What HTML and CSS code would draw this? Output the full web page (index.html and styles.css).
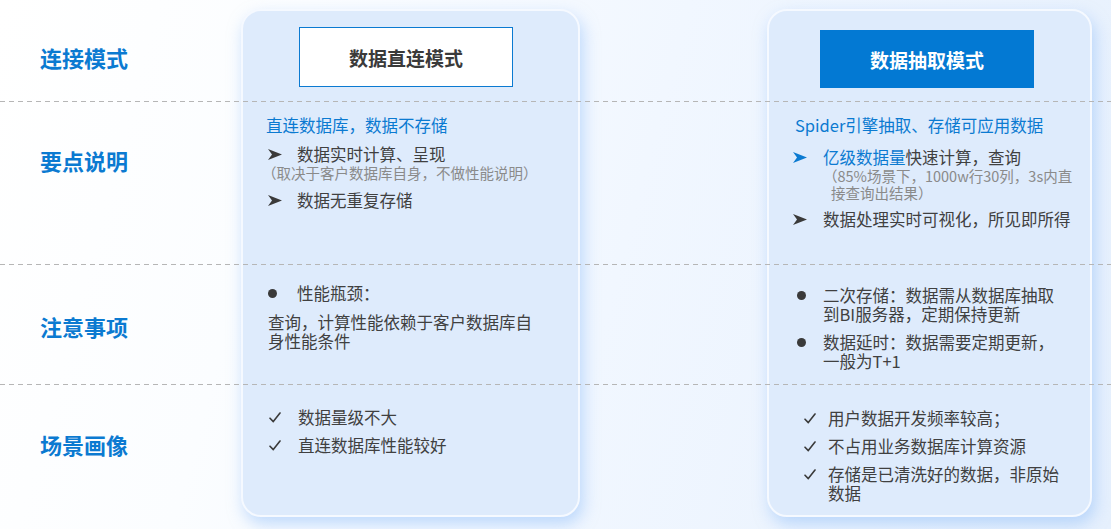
FILE: index.html
```html
<!DOCTYPE html>
<html lang="zh-CN">
<head>
<meta charset="utf-8">
<title>连接模式对比</title>
<link rel="stylesheet" href="styles.css">
</head>
<body>
<div class="board">
  <div class="card col-a"></div>
  <div class="card col-b"></div>

  <div class="rule row-1"></div>
  <div class="rule row-2"></div>
  <div class="rule row-3"></div>

  <div class="label row-1">连接模式</div>
  <div class="label row-2">要点说明</div>
  <div class="label row-3">注意事项</div>
  <div class="label row-4">场景画像</div>

  <!-- Row 1: mode headers -->
  <div class="cell col-a row-1">
    <div class="mode mode-outline">数据直连模式</div>
  </div>
  <div class="cell col-b row-1">
    <div class="mode mode-solid">数据抽取模式</div>
  </div>

  <!-- Row 2: key points -->
  <div class="cell col-a row-2 pad-2 left">
    <div class="lead">直连数据库，数据不存储</div>
    <div class="item arrow first">
      <span class="ico"><svg width="14" height="11" viewBox="0 0 14 11"><polygon points="0,0 14,5.5 0,11 4,5.5" fill="#3a3a3a"/></svg></span>
      <span class="txt">数据实时计算、呈现</span>
    </div>
    <div class="sub sub-a">（取决于客户数据库自身，不做性能说明）</div>
    <div class="item arrow">
      <span class="ico"><svg width="14" height="11" viewBox="0 0 14 11"><polygon points="0,0 14,5.5 0,11 4,5.5" fill="#3a3a3a"/></svg></span>
      <span class="txt">数据无重复存储</span>
    </div>
  </div>
  <div class="cell col-b row-2 pad-2 right">
    <div class="lead">Spider引擎抽取、存储可应用数据</div>
    <div class="item arrow first wide">
      <span class="ico"><svg width="14" height="11" viewBox="0 0 14 11"><polygon points="0,0 14,5.5 0,11 4,5.5" fill="#0b7ad1"/></svg></span>
      <span class="txt"><span class="hl">亿级数据量</span>快速计算，查询
        <span class="sub sub-b">（85%场景下，1000w行30列，3s内直<br>接查询出结果）</span>
      </span>
    </div>
    <div class="item arrow">
      <span class="ico"><svg width="14" height="11" viewBox="0 0 14 11"><polygon points="0,0 14,5.5 0,11 4,5.5" fill="#3a3a3a"/></svg></span>
      <span class="txt">数据处理实时可视化，所见即所得</span>
    </div>
  </div>

  <!-- Row 3: notes -->
  <div class="cell col-a row-3 pad-3 left">
    <div class="item dot">
      <span class="ico"><span class="disc"></span></span>
      <span class="txt">性能瓶颈：</span>
    </div>
    <p class="para">查询，计算性能依赖于客户数据库自<br>身性能条件</p>
  </div>
  <div class="cell col-b row-3 pad-3b right">
    <div class="item dot">
      <span class="ico"><span class="disc"></span></span>
      <span class="txt">二次存储：数据需从数据库抽取<br>到BI服务器，定期保持更新</span>
    </div>
    <div class="item dot">
      <span class="ico"><span class="disc"></span></span>
      <span class="txt">数据延时：数据需要定期更新，<br>一般为T+1</span>
    </div>
  </div>

  <!-- Row 4: scenarios -->
  <div class="cell col-a row-4 pad-4 left">
    <div class="item check">
      <span class="ico"><svg width="12" height="11" viewBox="0 0 12 11"><path d="M1 6.2 L4.3 9.6 L11 1" fill="none" stroke="#3a3a3a" stroke-width="1.6" stroke-linecap="round" stroke-linejoin="round"/></svg></span>
      <span class="txt">数据量级不大</span>
    </div>
    <div class="item check">
      <span class="ico"><svg width="12" height="11" viewBox="0 0 12 11"><path d="M1 6.2 L4.3 9.6 L11 1" fill="none" stroke="#3a3a3a" stroke-width="1.6" stroke-linecap="round" stroke-linejoin="round"/></svg></span>
      <span class="txt">直连数据库性能较好</span>
    </div>
  </div>
  <div class="cell col-b row-4 pad-4b right">
    <div class="item check">
      <span class="ico"><svg width="12" height="11" viewBox="0 0 12 11"><path d="M1 6.2 L4.3 9.6 L11 1" fill="none" stroke="#3a3a3a" stroke-width="1.6" stroke-linecap="round" stroke-linejoin="round"/></svg></span>
      <span class="txt">用户数据开发频率较高；</span>
    </div>
    <div class="item check">
      <span class="ico"><svg width="12" height="11" viewBox="0 0 12 11"><path d="M1 6.2 L4.3 9.6 L11 1" fill="none" stroke="#3a3a3a" stroke-width="1.6" stroke-linecap="round" stroke-linejoin="round"/></svg></span>
      <span class="txt">不占用业务数据库计算资源</span>
    </div>
    <div class="item check">
      <span class="ico"><svg width="12" height="11" viewBox="0 0 12 11"><path d="M1 6.2 L4.3 9.6 L11 1" fill="none" stroke="#3a3a3a" stroke-width="1.6" stroke-linecap="round" stroke-linejoin="round"/></svg></span>
      <span class="txt">存储是已清洗好的数据，非原始<br>数据</span>
    </div>
  </div>
</div>
</body>
</html>
```

FILE: styles.css
```css
* { box-sizing: border-box; }
html, body { margin: 0; padding: 0; }
body {
  width: 1111px;
  height: 529px;
  overflow: hidden;
  font-family: "Noto Sans CJK SC", "Liberation Sans", sans-serif;
  color: #404040;
  background: linear-gradient(105deg, #ffffff 0%, #fbfdff 25%, #f1f7ff 55%, #e6f0fd 100%);
}

.board {
  display: grid;
  grid-template-columns: 241px 339px 187px 325px 19px;
  grid-template-rows: 102px 163px 120px 144px;
  width: 1111px;
  height: 529px;
}

.col-a { grid-column: 2; }
.col-b { grid-column: 4; }
.row-1 { grid-row: 1; }
.row-2 { grid-row: 2; }
.row-3 { grid-row: 3; }
.row-4 { grid-row: 4; }

.card {
  grid-row: 1 / -1;
  margin: 9px 0 12px;
  border-radius: 20px;
  background: #deebfc;
  border: 2px solid #f5f9ff;
  box-shadow: 3px 7px 16px rgba(135, 185, 250, 0.5);
}

.rule {
  grid-column: 1 / -1;
  align-self: end;
  height: 1px;
  background: repeating-linear-gradient(90deg, #b6b6b6 0 5px, transparent 5px 9px);
}

.label {
  grid-column: 1;
  padding: 44px 0 0 40px;
  font-size: 22px;
  line-height: 26px;
  font-weight: 700;
  color: #0b7ad1;
}
.label.row-2 { padding-top: 45px; }
.label.row-3 { padding-top: 48px; }
.label.row-4 { padding-top: 46px; }

.cell { min-width: 0; }

.mode {
  width: 214px;
  display: flex;
  align-items: center;
  justify-content: center;
  font-size: 19px;
  font-weight: 700;
}
.mode-outline {
  margin: 27px 0 0 58px;
  height: 60px;
  background: #ffffff;
  border: 1px solid #0b7ad1;
  color: #3a3a3a;
}
.mode-solid {
  margin: 30px 0 0 53px;
  height: 58px;
  background: #0379d3;
  color: #ffffff;
}

.left { padding-left: 25px; }
.right { padding-left: 28px; }

.pad-2 { padding-top: 14px; }
.pad-3 { padding-top: 19px; }
.pad-3b { padding-top: 21px; }
.pad-4 { padding-top: 23px; }
.pad-4b { padding-top: 24px; }

.lead {
  font-size: 16.5px;
  line-height: 19px;
  color: #0b7ad1;
  white-space: nowrap;
}

.item {
  display: flex;
  align-items: flex-start;
  margin-top: 9px;
  font-size: 16.5px;
  line-height: 19px;
  white-space: nowrap;
}
.pad-3 .item:first-child,
.pad-3b .item:first-child,
.pad-4 .item:first-child,
.pad-4b .item:first-child { margin-top: 0; }
.item.first { margin-top: 10px; }
.item.first.wide { margin-top: 13px; }

.ico {
  flex: none;
  height: 19px;
  display: flex;
  align-items: center;
}

.left .arrow { margin-left: 2px; }
.left .arrow .ico { width: 29px; }
.right .arrow { margin-left: -2px; }
.right .arrow .ico { width: 30px; }

.left .dot { margin-left: 2px; }
.left .dot .ico { width: 29px; }
.right .dot { margin-left: 2px; }
.right .dot .ico { width: 26px; }
.disc {
  width: 9px;
  height: 9px;
  border-radius: 50%;
  background: #3a3a3a;
}

.left .check { margin-left: 3px; }
.left .check .ico { width: 29px; }
.right .check { margin-left: 9px; }
.right .check .ico { width: 24px; }

.txt { display: block; }
.hl { color: #0b7ad1; }

.sub {
  display: block;
  font-size: 14.5px;
  line-height: 17px;
  color: #8a8a8a;
  white-space: nowrap;
}
.sub-a { margin-left: -4px; line-height: 18px; }
.sub-b { margin-left: 0; padding-left: 8px; text-indent: -8px; }

.para {
  margin: 10px 0 0 2px;
  font-size: 16.5px;
  line-height: 19px;
  white-space: nowrap;
}
```
